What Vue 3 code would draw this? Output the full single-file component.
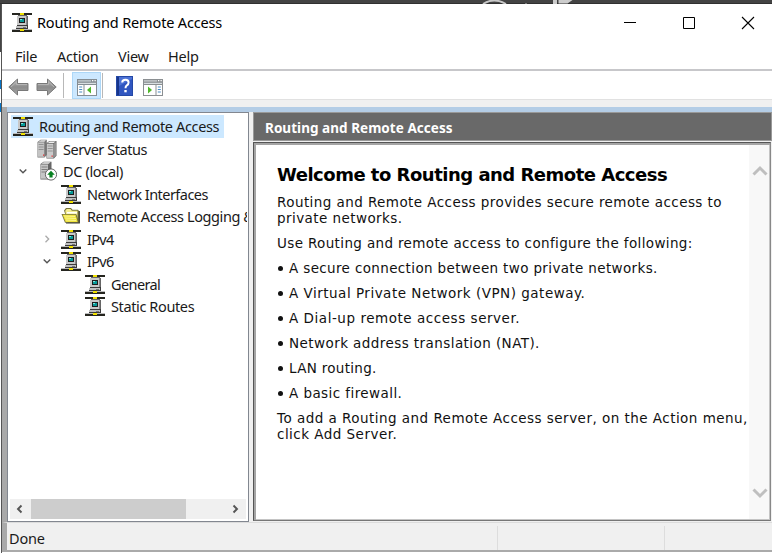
<script setup>
import { h } from 'vue'

const menus = ['File', 'Action', 'View', 'Help']

const tree = [
  { label: 'Routing and Remote Access', level: 0, icon: 'net', cls: 'root' },
  { label: 'Server Status', level: 1, icon: 'servers', cls: 't1' },
  { label: 'DC (local)', level: 1, icon: 'server', chevron: 'open', cls: 't2' },
  { label: 'Network Interfaces', level: 2, icon: 'net', cls: 't3' },
  { label: 'Remote Access Logging &', level: 2, icon: 'folder', cls: 't4' },
  { label: 'IPv4', level: 2, icon: 'net', chevron: 'closed', cls: 't5' },
  { label: 'IPv6', level: 2, icon: 'net', chevron: 'open', cls: 't5' },
  { label: 'General', level: 3, icon: 'net', cls: 't7' },
  { label: 'Static Routes', level: 3, icon: 'net', cls: 't8' },
]

const bullets = [
  'A secure connection between two private networks.',
  'A Virtual Private Network (VPN) gateway.',
  'A Dial-up remote access server.',
  'Network address translation (NAT).',
  'LAN routing.',
  'A basic firewall.',
]

const p = (d, fill, extra = {}) => h('path', { d, fill, ...extra })
const line = (d, stroke, width = 1) => h('path', { d, fill: 'none', stroke, 'stroke-width': width })

const shapes = {
  net: () => [
    p('M0 1h20v2H0zM0 18h20v2H0z', '#25251f'),
    p('M0 17h20v1H0z', '#bbb'),
    p('M8 1h4v3H8zM8 17h4v2H8z', '#f0e000'),
    p('M5 4h1V3h9v1h1v9h-1v1H5z', '#666'),
    p('M5 4h9v9H5z', '#c8c8c8'),
    p('M14 4h1v9h-1z', '#888'),
    p('M7 6h6v5H7z', '#1c1c1c'),
    p('M8 7h4v3H8z', '#079a98'),
    p('M8 7h2v1H8z', '#7fe6dd'),
    p('M5 13h11v1H5zM4 14h12v3H4z', '#3b3b3b'),
    p('M4 14h11v2H4z', '#c0c0c0'),
    p('M11 15h3v1h-3z', '#777'),
  ],
  servers: () => [
    p('M.5 3l3-2.3h6.3V16l-2.3 2.4h-7z', '#777'),
    p('M1 3.4h6.3v14.4H1z', '#c4c4c4'),
    p('M1.500 2.800L4 1.300h5L7.300 2.800z', '#e4e4e4'),
    line('M1.600 5.500h5M1.600 8h5M1.600 10.500h5', '#858585', .8),
    p('M9.500 4.200L12.300 2h7.200v14.800l-2.600 2.700H9.500z', '#666'),
    p('M10 4.700h6.400v14.200H10z', '#cbcbcb'),
    p('M16.800 4.700L19 3v13.600l-2.200 2z', '#929292'),
    p('M10.700 4l2-1.400h6L16.700 4z', '#f0f0f0'),
    line('M10.700 7h5M10.700 9.500h5M10.700 12h5', '#858585', .8),
    p('M6 15.500h1.300v1.300H6zM14.500 16.500h1.300v1.300h-1.300z', '#e03030'),
  ],
  server: () => [
    p('M3.500 3l3-2.300h8V15l-3 3.500h-8z', '#666'),
    p('M4 3.500h7v14.200H4z', '#c6c6c6'),
    p('M4.500 2.800l2.300-1.600h6.700l-2 1.600z', '#eee'),
    line('M4.500 6h6M4.500 8.500h6M4.500 11h6', '#777', .9),
    h('circle', { cx: 14, cy: 13.500, r: 5.600, fill: '#fff', stroke: '#555', 'stroke-width': .9 }),
    p('M14 9.800l3.800 3.900h-2.200v2.900h-3.200v-2.900h-2.200z', '#078020'),
  ],
  folder: () => [
    p('M3 4.500L5 2h5l1.500 1.800H17l1 1.200v11.500H7z', '#77733c'),
    p('M4.200 4.800L5.700 3h3.800l1.400 1.800h5.600v9H6z', '#f5ee92'),
    p('M6 6.500h10M6 8h10', '#fff', { stroke: '#fff' }),
    p('M.5 8h14.800l3 8.800H4z', '#77733c'),
    p('M1.600 8.800h13l2.100 7.100H4.700z', '#efe43c'),
    line('M3 10l11 .5M4 12l11 .5M5 14l10 .5', '#fffbb8', .7),
    p('M17.700 5h1.200v12.500H5v-1h12.700z', '#39382c'),
  ],
}
const Icon = (props) => h('svg', { class: 'icon', viewBox: '0 0 20 20', width: 20, height: 20 }, shapes[props.name]())
Icon.props = ['name']
</script>

<template>
  <div class="screen">
    <div class="backdrop">
      <svg width="772" height="4" viewBox="0 0 772 4">
        <path d="M483 4Q494-3 506 4" fill="none" stroke="#c8c8c8" stroke-width="2" />
        <path d="M525 3h2v1h-2z" fill="#777" />
        <path d="M553 0h4v4h-4zM558.5 0h14l-5 3.5h-9z" fill="#ccc" />
      </svg>
    </div>
    <div class="body">
      <div class="behind">
        <i class="dark"></i><i class="light"></i><i class="blue"></i><i class="gap"></i><i class="blue"></i>
        <i class="rest"></i>
      </div>
      <main class="window">
        <header class="titlebar">
          <Icon name="net" />
          <span class="title">Routing and Remote Access</span>
          <div class="controls">
            <svg width="14" height="14" viewBox="0 0 14 14"><path d="M1 6.500h12" stroke="#000" /></svg>
            <svg width="14" height="14" viewBox="0 0 14 14"><path d="M1.500 1.500h11v11h-11z" fill="none" stroke="#000" /></svg>
            <svg width="14" height="14" viewBox="0 0 14 14"><path d="M1 1l12 12M13 1L1 13" stroke="#000" stroke-width="1.100" /></svg>
          </div>
        </header>
        <nav class="menubar">
          <span v-for="m in menus" :key="m" :class="m.toLowerCase()">{{ m }}</span>
        </nav>
        <div class="toolbar">
          <svg class="arrow" width="21" height="18" viewBox="0 0 21 18">
            <defs><linearGradient id="g" x2="0" y2="1"><stop stop-color="#bbb" /><stop offset=".5" stop-color="#8c8c8c" /><stop offset="1" stop-color="#a5a5a5" /></linearGradient></defs>
            <path d="M.8 9L9.500 1v4.500h10.500v7H9.500V17z" fill="url(#g)" stroke="#797979" />
            <path d="M3 9l5.500-5v2.500H19" fill="none" stroke="#b4b4b4" />
          </svg>
          <svg class="arrow fwd" width="21" height="18" viewBox="0 0 21 18">
            <path d="M20.200 9L11.500 1v4.500H1v7h10.500V17z" fill="url(#g)" stroke="#797979" />
            <path d="M2 6.500h10.500V3.800L18 9" fill="none" stroke="#b4b4b4" />
          </svg>
          <i class="sep"></i>
          <div class="pressed">
            <svg width="20" height="18" viewBox="0 0 20 18">
              <path d="M0 0h20v17H0z" fill="#858d93" />
              <path d="M1 1h13v1.700H1z" fill="#b8c0c5" /><path d="M15 1h1.300v1.300H15zM17.500 1h1.300v1.300h-1.300z" fill="#fff" />
              <path d="M1 3.800h18V5H1z" fill="#d9dfe2" />
              <path d="M1 6h5.500v10H1zM7.500 6H19v10H7.500z" fill="#fff" />
              <path d="M2.200 8h3M2.200 10.500h3M2.200 13h3" stroke="#498bc3" stroke-width="1.200" />
              <path d="M10 11l4-3.500v7z" fill="#50b92b" />
            </svg>
          </div>
          <i class="sep second"></i>
          <svg class="help-icon" width="17" height="20" viewBox="0 0 17 20">
            <path d="M0 0h17v20H0z" fill="#2448a6" /><path d="M3 1h13v18H3z" fill="#4c72d5" /><path d="M1 1h2v18H1z" fill="#17358a" />
            <path d="M3 10L16 3v16H3z" fill="#3056c0" />
            <path d="M6.200 6.500Q6.300 3.800 9.400 3.800q3.200 0 3.200 2.700 0 1.700-1.700 2.800-1.400 1-1.400 3" fill="none" stroke="#fff" stroke-width="2" />
            <path d="M8.300 14h2.400v2.300H8.300z" fill="#fff" />
          </svg>
          <svg class="pane-icon" width="20" height="18" viewBox="0 0 20 18">
            <path d="M0 0h20v17H0z" fill="#8b8f92" />
            <path d="M1 1h13v1.700H1z" fill="#bcc0c3" /><path d="M15 1h1.300v1.300H15zM17.500 1h1.300v1.300h-1.300z" fill="#fff" />
            <path d="M1 3.800h18V5H1z" fill="#d9dfe2" />
            <path d="M1 6h11.500v10H1zM13.500 6H19v10h-5.500z" fill="#fff" />
            <path d="M14.800 8h3M14.800 10.500h3M14.800 13h3" stroke="#498bc3" stroke-width="1.200" />
            <path d="M9 11L5 7.500v7z" fill="#50b92b" />
          </svg>
        </div>
        <div class="spacer"></div>
        <div class="client-top"></div>
        <div class="client">
          <section class="tree-pane">
            <div class="tree">
              <div v-for="n in tree" :key="n.label" class="node" :class="[n.cls, 'level' + n.level]">
                <span class="chev">
                  <svg v-if="n.chevron" width="10" height="10" viewBox="0 0 10 10">
                    <path v-if="n.chevron === 'open'" d="M1.700 3.500L5 6.700l3.300-3.200" fill="none" stroke="#555" stroke-width="1.400" />
                    <path v-else d="M3.500 1.700L6.700 5 3.500 8.300" fill="none" stroke="#aaa" stroke-width="1.300" />
                  </svg>
                </span>
                <Icon :name="n.icon" />
                <span class="label">{{ n.label }}</span>
              </div>
            </div>
            <div class="hscroll">
              <svg width="21" height="20" viewBox="0 0 21 20"><path d="M11.500 6.500L8 10l3.500 3.500" fill="none" stroke="#555" stroke-width="1.900" /></svg>
              <i class="thumb"></i>
              <svg class="right" width="21" height="20" viewBox="0 0 21 20"><path d="M8.500 6.500L12 10l-3.500 3.500" fill="none" stroke="#555" stroke-width="1.900" /></svg>
            </div>
          </section>
          <section class="detail">
            <div class="detail-title"><span>Routing and Remote Access</span></div>
            <div class="detail-body">
              <article>
                <h1>Welcome to Routing and Remote Access</h1>
                <div class="para"><span>Routing and Remote Access provides secure remote access to</span><span>private networks.</span></div>
                <div class="para intro"><span>Use Routing and remote access to configure the following:</span></div>
                <div v-for="(b, i) in bullets" :key="b" class="para bullet" :class="'b' + i"><i></i><span>{{ b }}</span></div>
                <div class="para last"><span>To add a Routing and Remote Access server, on the Action menu,</span><span>click Add Server.</span></div>
              </article>
              <div class="vscroll">
                <svg width="16" height="12" viewBox="0 0 16 12"><path d="M1.500 9.500L8 3l6.500 6.500" fill="none" stroke="#bfbfbf" stroke-width="3" /></svg>
                <svg width="16" height="12" viewBox="0 0 16 12"><path d="M1.500 2.500L8 9l6.500-6.500" fill="none" stroke="#bfbfbf" stroke-width="3" /></svg>
              </div>
            </div>
          </section>
        </div>
        <footer class="status"><span class="done">Done</span><i></i><i></i></footer>
      </main>
    </div>
  </div>
</template>

<style>
body { margin: 0; overflow: hidden; }
</style>

<style scoped>
* { box-sizing: border-box; }
.screen { width: 772px; height: 553px; overflow: hidden; display: flex; flex-direction: column; font: 14.5px/20px "Noto Sans", "Open Sans", sans-serif; color: #1a1a1a; background: #fff; white-space: nowrap; }
svg { display: block; flex: none; }
.backdrop { height: 4px; flex: none; background: #434343; border-bottom: 1px solid #303030; }
.body { display: flex; height: 549px; }
.behind { width: 2px; display: flex; flex-direction: column; border-right: 1px solid #555; }
.behind i { background: #fff; }
.behind .dark { height: 48px; background: #444; }
.behind .light { height: 28px; }
.behind .blue { height: 9px; background: #0874c5; }
.behind .gap { height: 14px; }
.behind .rest { flex: 1; }
.window { width: 770px; display: flex; flex-direction: column; background: #fff; }
.titlebar { height: 38px; flex: none; display: flex; align-items: center; padding: 0 17px 0 10px; }
.titlebar .icon { margin-top: -2px; }
.title { margin: -2px 0 0 5px; color: #000; letter-spacing: -.16px; }
.controls { display: flex; gap: 45px; margin-left: auto; }
.menubar { height: 29px; flex: none; display: flex; padding: 3px 0 0 13px; border-bottom: 2px solid #c7c7ca; line-height: 22px; letter-spacing: -.25px; }
.menubar .file { width: 42px; }
.menubar .action { width: 61px; }
.menubar .view { width: 50px; }
.toolbar { height: 28px; flex: none; display: flex; align-items: center; padding-left: 6px; }
.arrow { margin-top: 3px; }
.fwd { margin-left: 7px; }
.sep { width: 1px; height: 25px; margin-left: 6px; background: #b8b8b8; }
.pressed { width: 29px; height: 27px; margin-left: 8px; background: #cce8ff; border: 1px solid #add7f7; padding: 6px 0 0 4px; }
.sep.second { margin-left: 1px; }
.help-icon { margin: 2px 0 0 13px; }
.pane-icon { margin: 5px 0 0 10px; }
.spacer { height: 8px; flex: none; background: #f0f0f0; border-top: 1px solid #e1e1e1; }
.client-top { height: 5px; flex: none; margin-left: 5px; background: #b4cde6; box-shadow: -5px 0 #a9a9a9; }
.client { height: 410px; flex: none; display: flex; background: #f0f0f0; border-left: 5px solid #a9a9a9; }
.tree-pane { width: 242px; height: 410px; flex: none; display: flex; flex-direction: column; border: 1px solid #828790; background: #fff; padding: 2px; overflow: hidden; }
.tree { flex: 1; display: flex; flex-direction: column; padding-left: 1px; }
.node { display: flex; align-items: center; height: 22.5px; overflow: hidden; flex: none; width: 236px; }
.root { width: 213px; background: #cce8ff; letter-spacing: -.36px; }
.t1 { letter-spacing: -.46px; }
.t2 { letter-spacing: -.35px; }
.t3 { letter-spacing: -.54px; }
.t4 { letter-spacing: -.41px; }
.t5 { letter-spacing: -.7px; }
.t7 { letter-spacing: -.6px; }
.t8 { letter-spacing: -.38px; }
.chev { width: 20px; margin-right: 4px; display: flex; justify-content: center; flex: none; }
.level0 { padding-left: 2px; }
.level0 .chev { display: none; }
.level1 { padding-left: 2px; }
.level2 { padding-left: 26px; }
.level3 { padding-left: 50px; }
.label { margin-left: 6px; }
.hscroll { height: 20px; display: flex; background: #f0f0f0; }
.thumb { width: 155px; background: #cdcdcd; }
.right { margin-left: auto; }
.detail { margin-left: 4px; width: 519px; display: flex; flex-direction: column; }
.detail-title { height: 29px; flex: none; background: #696969; border: 1px solid #999; color: #fff; font-weight: 700; font-size: 13.5px; line-height: 20px; padding: 5px 0 0 11px; letter-spacing: .04px; }
.detail-body { width: 518px; height: 379px; margin-top: 1px; display: flex; background: #fff; border: 1px solid #555; border-right-color: #888; border-bottom-color: #777; box-shadow: inset 2px 2px #a5a5a5, inset -1px -1px #c4c4c4; }
article { width: 495px; padding: 20px 0 0 23px; font: 13.5px/16px "DejaVu Sans", sans-serif; letter-spacing: .43px; color: #111; }
h1 { margin: 0 0 7px; font-size: 18px; line-height: 24px; letter-spacing: -.5px; color: #000; }
.para { margin-bottom: 9px; }
.para span { display: block; height: 16px; }
.intro { letter-spacing: .36px; }
.bullet { display: flex; align-items: center; }
.bullet i { width: 5px; height: 5px; margin: 0 6px 0 1px; border-radius: 50%; background: #111; }
.b0 { letter-spacing: .36px; }
.b1 { letter-spacing: .5px; }
.b2 { letter-spacing: .54px; }
.b4 { letter-spacing: .3px; }
.last { letter-spacing: .47px; }
.vscroll { width: 20px; display: flex; flex-direction: column; justify-content: space-between; align-items: center; margin: 2px 0 1px; padding: 20px 0 20px 2px; background: #f8f8f8; }
.status { height: 30px; flex: none; display: flex; background: #f0f0f0; border-left: 5px solid #a9a9a9; border-bottom: 2px solid #aaa; border-top: 1px solid #dcdcdc; padding: 3px 0 0 2px; line-height: 24px; }
.done { width: 488px; flex: none; letter-spacing: -.2px; }
.status i { width: 167px; flex: none; border-left: 1px solid #ddd; }
</style>
